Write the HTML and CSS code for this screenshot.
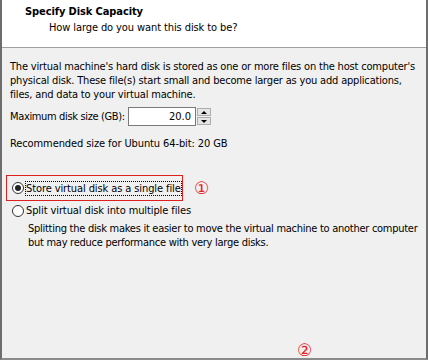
FILE: index.html
```html
<!DOCTYPE html>
<html lang="en">
<head>
    <meta charset="UTF-8" />
    <title>Specify Disk Capacity</title>
    <link rel="stylesheet" href="styles.css">
</head>
<body>
    <div class="wizard">
        <div class="header">
            <div class="title">Specify Disk Capacity</div>
            <div class="subtitle">How large do you want this disk to be?</div>
        </div>
        <div class="content">
            <p class="intro">The virtual machine's hard disk is stored as one or more files on the host computer's<br>physical disk. These file(s) start small and become larger as you add applications,<br>files, and data to your virtual machine.</p>
            <div class="size-row">
                <label for="diskSize">Maximum disk size (GB):</label>
                <div class="spin">
                    <input type="text" id="diskSize" value="20.0" />
                    <div class="spin-buttons">
                        <span class="spin-btn up"></span>
                        <span class="spin-btn down"></span>
                    </div>
                </div>
            </div>
            <div class="recommend">Recommended size for Ubuntu 64-bit: 20 GB</div>

            <div class="options">
                <div class="option-row">
                    <label class="radio marked">
                        <span class="dot checked"></span>
                        <span class="focus-text">Store virtual disk as a single file</span>
                    </label>
                    <span class="circled">&#9312;</span>
                </div>
                <label class="radio">
                    <span class="dot"></span>
                    <span>Split virtual disk into multiple files</span>
                </label>
                <p class="hint">Splitting the disk makes it easier to move the virtual machine to another computer<br>but may reduce performance with very large disks.</p>
            </div>
            <div class="footer-mark"><span class="circled">&#9313;</span></div>
        </div>
    </div>
</body>
</html>
```

FILE: styles.css
```css
body {
  margin: 0;
  font-family: "DejaVu Sans Condensed", "DejaVu Sans", sans-serif;
  font-size: 11px;
  letter-spacing: -0.1px;
  color: #000;
  background: #fff;
}
.wizard {
  width: 428px;
  height: 360px;
  box-sizing: border-box;
  border-left: 2px solid #6d6d6d;
  border-right: 2px solid #6d6d6d;
  border-bottom: 2px solid #8a8a8a;
  display: flex;
  flex-direction: column;
}
.header {
  background: #fff;
  height: 48px;
  padding: 5px 0 0 23px;
  box-sizing: border-box;
  border-bottom: 1px solid #a0a0a0;
}
.title {
  font-weight: bold;
  font-size: 11px;
}
.subtitle {
  margin: 3px 0 0 24px;
}
.content {
  flex: 1;
  background: #f0f0f0;
  padding: 12px 8px 0 8px;
  display: flex;
  flex-direction: column;
  white-space: nowrap;
}
.intro {
  margin: 0;
  line-height: 14px;
  letter-spacing: -0.18px;
}
.size-row {
  display: flex;
  align-items: center;
  margin-top: 5px;
}
.size-row label {
  width: 118px;
  flex-shrink: 0;
  letter-spacing: -0.35px;
}
.spin {
  display: flex;
  align-items: center;
}
.spin input {
  width: 68px;
  height: 19px;
  box-sizing: border-box;
  border: 1px solid #7a7a7a;
  text-align: right;
  font-family: "DejaVu Sans Condensed", "DejaVu Sans", sans-serif;
  font-size: 11px;
  padding: 0 4px 0 0;
  background: #fff;
}
.spin-buttons {
  display: flex;
  flex-direction: column;
  margin-left: 1px;
  gap: 1px;
}
.spin-btn {
  width: 14px;
  height: 8px;
  box-sizing: border-box;
  border: 1px solid #adadad;
  background: #e5e5e5;
  display: flex;
  align-items: center;
  justify-content: center;
}
.spin-btn.up::after {
  content: "";
  border-left: 3px solid transparent;
  border-right: 3px solid transparent;
  border-bottom: 3px solid #000;
}
.spin-btn.down::after {
  content: "";
  border-left: 3px solid transparent;
  border-right: 3px solid transparent;
  border-top: 3px solid #000;
}
.recommend {
  margin-top: 11px;
}
.options {
  margin-top: 25px;
  display: flex;
  flex-direction: column;
}
.option-row {
  display: flex;
  align-items: center;
}
.radio {
  display: flex;
  align-items: center;
  height: 19px;
  padding-left: 2px;
}
.radio.marked {
  border: 1px solid #e02020;
  margin-left: -4px;
  padding-left: 5px;
  width: 170px;
  height: 24px;
}
.dot {
  width: 12px;
  height: 12px;
  box-sizing: border-box;
  border: 1px solid #333;
  border-radius: 50%;
  background: #fff;
  margin-right: 2px;
  display: flex;
  align-items: center;
  justify-content: center;
}
.dot.checked::after {
  content: "";
  width: 6px;
  height: 6px;
  border-radius: 50%;
  background: #222;
}
.focus-text {
  outline: 1px dotted #000;
}
.circled {
  color: #e8231f;
  font-size: 17px;
  margin-left: 11px;
  font-family: "DejaVu Sans", sans-serif;
}
.hint {
  margin: 2px 0 0 18px;
  line-height: 14px;
  letter-spacing: -0.27px;
}
.footer-mark {
  margin-top: auto;
  padding-left: 276px;
  height: 16px;
  line-height: 16px;
}
```
